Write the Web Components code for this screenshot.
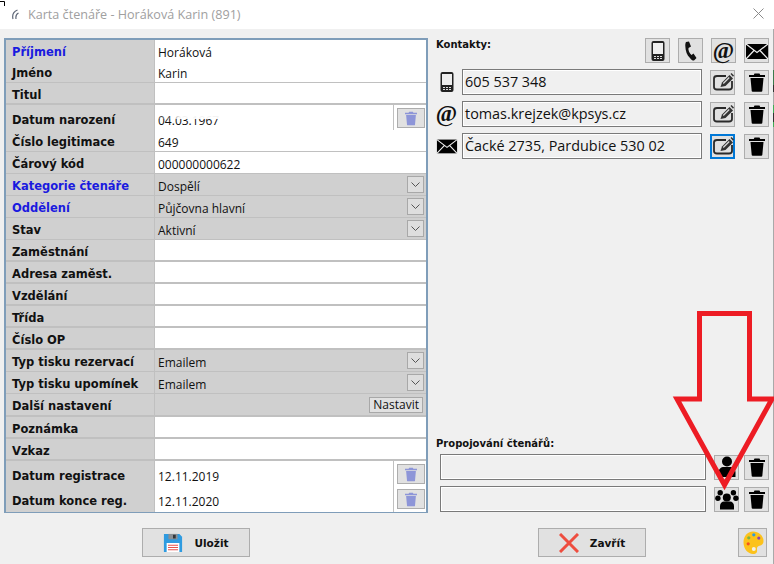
<!DOCTYPE html>
<html>
<head>
<meta charset="utf-8">
<title>Karta čtenáře</title>
<style>
  html, body { margin: 0; padding: 0; background: #f0f0f0; }
  body { width: 774px; height: 564px; overflow: hidden; font-family: "DejaVu Sans", sans-serif; }
</style>
</head>
<body>
<reader-card></reader-card>

<script>
const ICONS = {
  mobile: `<svg viewBox="0 0 24 24" width="24" height="24"><rect x="5.500" y="2" width="13" height="20" rx="2" fill="#222"/><rect x="7" y="4" width="10" height="11" fill="#eee"/><path d="M8 17h2v1H8zM11 17h2v1h-2zM14 17h2v1h-2zM8 19h2v1H8zM11 19h2v1h-2zM14 19h2v1h-2z" fill="#ddd"/></svg>`,
  phone: `<svg viewBox="0 0 24 24" width="24" height="24"><path d="M7 3l3-.5 2 5-2.500 1.500C9 11.500 10.500 14 12.500 16l2-1.500 3 4.500-2.500 2.500c-1 .3-2.500-.5-4-2.500C8 16.500 6.500 12 6.300 7 6.200 5.500 6.500 4 7 3z" fill="#111"/></svg>`,
  envelope: `<svg viewBox="0 0 24 24" width="24" height="24"><rect x="1" y="5" width="22" height="15" fill="#000"/><path d="M1 5l11 8.500L23 5M1 20l8-8.500M23 20l-8-8.500" stroke="#eee" stroke-width="1.200" fill="none"/></svg>`,
  edit: `<svg viewBox="0 0 24 24" width="24" height="24"><path d="M15 6H6C4 6 3 7 3 8.500V17c0 1.500 1 2.500 3 2.500h12c2 0 3-1 3-2.500v-6" fill="none" stroke="#2a2a2a" stroke-width="1.800"/><path d="M9.500 17l1.500-4.500 7.500-7.500 3.500 3.500-7.500 7.500z" fill="#333"/><path d="M19.500 4l1-1 2.500 2.500-1 1.300z" fill="#333"/><path d="M11.800 13l6-6 .9.900-6 6z" fill="#ddd"/></svg>`,
  trash: `<svg viewBox="0 0 24 24" width="24" height="24"><path d="M9.500 3.500h5l.7 1.500H20v2H4V5h4.800z" fill="currentColor"/><path d="M5.500 8h13L17.300 21c-.1.500-.4.800-1 .800H7.700c-.6 0-.9-.3-1-.800z" fill="currentColor"/></svg>`,
  person: `<svg viewBox="0 0 24 24" width="24" height="24"><circle cx="12" cy="6.500" r="5" fill="#000"/><path d="M3.500 22v-4.500c0-3.500 2.500-5.500 5.500-5.500h6c3 0 5.500 2 5.500 5.500V22z" fill="#000"/></svg>`,
  group: `<svg viewBox="0 0 24 24" width="24" height="24"><circle cx="11.800" cy="10.500" r="4" fill="#000"/><circle cx="5.200" cy="5.800" r="2.700" fill="#000"/><circle cx="18.400" cy="5.800" r="2.700" fill="#000"/><circle cx="2.900" cy="11.300" r="2.700" fill="#000"/><circle cx="20.900" cy="11.300" r="2.700" fill="#000"/><path d="M5 22.500v-3.500c0-3 2-4.500 4-4.500h6c2 0 4 1.500 4 4.500v3.500z" fill="#000"/></svg>`,
  at: `<span style="font:700 23px/24px 'Liberation Serif', serif;color:#111">@</span>`,
  floppy: `<svg viewBox="0 0 22 22" width="20" height="20"><path d="M1 1h17l3 3v17H1z" fill="#2f9be0"/><rect x="6" y="1" width="10" height="6" fill="#8a8f94"/><rect x="11" y="2" width="3" height="4" fill="#33363a"/><rect x="4" y="11" width="14" height="10" fill="#fff"/><path d="M5.500 13.500h11M5.500 16h11M5.500 18.500h11" stroke="#e8524c" stroke-width="1.200"/></svg>`,
  cross: `<svg viewBox="2 2 20 20" width="20" height="20"><path d="M3 3l18 18M21 3L3 21" stroke="#ee4d3f" stroke-width="3" fill="none"/></svg>`,
  palette: `<svg viewBox="0 0 24 25" width="24" height="25"><path d="M12 1.500C6 1.500 2.500 6.500 2.500 12.500 2.500 19 7 24 12 24c3.500 0 4.500-2 4-4.500-.3-2 .5-3.500 2.500-3.800 2.500-.4 4-1.700 4-4.700 0-5.500-5-9.500-10.500-9.500z" fill="#fcc21b"/><circle cx="12.800" cy="4.800" r="1.600" fill="#2f9be0"/><circle cx="7.800" cy="7.800" r="1.600" fill="#7cb342"/><circle cx="17.800" cy="8.100" r="1.600" fill="#8e44ad"/><circle cx="7.200" cy="13.800" r="1.600" fill="#f4511e"/><circle cx="12.800" cy="19" r="2" fill="#f5f0e6"/></svg>`
};

class ReaderRow extends HTMLElement {
  constructor() {
    super();
    this.attachShadow({ mode: "open" });
  }

  connectedCallback() {
    const type = this.getAttribute("type") || "text";
    const value = this.getAttribute("value") || "";
    let extra = "";
    if (type === "select") extra = `<span class="combo"><svg viewBox="0 0 9 5" width="9" height="5"><path d="M.5.500l4 4 4-4" fill="none" stroke="#555"/></svg></span>`;
    if (type === "date") extra = `<span class="date-btn"><span class="del">${ICONS.trash}</span></span>`;
    if (type === "button") extra = `<span class="nastavit">${this.getAttribute("action")}</span>`;
    this.shadowRoot.innerHTML = /* html */`
      <style>
        :host { display: block; height: var(--h, 22px); }
        .row { display: grid; grid-template-columns: 149px 1fr; height: 100%; box-sizing: border-box; border-bottom: 2px solid #c0c0c0; }
        .label { background: #d0d0d0; border-right: 1px solid #c0c0c0; padding: 3px 0 0 6px; display: flex; align-items: center; font: 700 11.500px "DejaVu Sans", sans-serif; color: var(--label, #111); white-space: nowrap; }
        .value { background: #fff; display: flex; align-items: center; padding-left: 3px; font: 12px "Open Sans", sans-serif; color: #111; position: relative; }
        :host([type=select]) .value, :host([type=button]) .value { background: #d0d0d0; }
        .text { flex: 1; padding-top: 4px; }
        .combo { display: flex; align-items: center; justify-content: center; width: 15px; height: 15px; margin-right: 2px; border: 1px solid #a8a8a8; background: #dedede; }
        .date-btn { align-self: stretch; width: 33px; box-sizing: border-box; border-left: 1px solid #c0c0c0; padding: 3px 0 3px 3px; display: flex; }
        .del { flex: 1; display: flex; align-items: center; justify-content: center; border: 1px solid #adadad; background: #e1e1e1; margin-right: 1px; color: #8d95d8; }
        .del svg { width: 18px; height: 18px; }
        .nastavit { font: 12px "Open Sans", sans-serif; line-height: 14px; padding: 0 3px; border: 1px solid #a8a8a8; background: #e1e1e1; margin-right: 3px; }
        .smudge { position: absolute; left: 3px; top: 0; width: 72px; height: 14px; background: linear-gradient(90deg, rgba(255,255,255,.2) 0 12px, rgba(255,255,255,.95) 22px); }
      </style>
      <div class="row">
        <div class="label"><slot></slot></div>
        <div class="value"><span class="text">${value}</span>${extra}${this.hasAttribute("smudge") ? '<span class="smudge"></span>' : ""}</div>
      </div>`;
  }
}

class IconBtn extends HTMLElement {
  constructor() {
    super();
    this.attachShadow({ mode: "open" });
  }

  connectedCallback() {
    this.shadowRoot.innerHTML = /* html */`
      <style>
        :host { display: flex; align-items: center; justify-content: center; box-sizing: border-box; width: 25px; height: 25px; border: 1px solid #adadad; background: #e1e1e1; color: #000; }
        :host([focus]) { border: 2px solid #0078d7; }
        svg { flex: none; }
      </style>
      ${ICONS[this.getAttribute("icon")]}`;
  }
}

class ContactRow extends HTMLElement {
  constructor() {
    super();
    this.attachShadow({ mode: "open" });
  }

  connectedCallback() {
    const icon = this.getAttribute("icon");
    this.shadowRoot.innerHTML = /* html */`
      <style>
        :host { display: flex; align-items: center; height: 26px; }
        .lead { width: 21px; margin-right: 5px; display: flex; justify-content: center; flex: none; }
        .lead svg { flex: none; width: 22px; height: 22px; }
        :host([icon=mobile]) .lead svg { width: 24px; height: 24px; }
        .field { width: 240px; height: 26px; box-sizing: border-box; border: 1px solid #7a7a7a; box-shadow: inset 0 0 0 1px #fff; padding-left: 2px; font: 14.400px/24px "Open Sans", sans-serif; color: #111; white-space: nowrap; }
        .btns { display: flex; gap: 9px; margin-left: 8px; }
      </style>
      <span class="lead">${ICONS[icon]}</span>
      <span class="field"><slot></slot></span>
      <span class="btns">
        <icon-btn icon="edit" ${this.hasAttribute("focus") ? "focus" : ""}></icon-btn>
        <icon-btn icon="trash"></icon-btn>
      </span>`;
  }
}

class LinkRow extends HTMLElement {
  constructor() {
    super();
    this.attachShadow({ mode: "open" });
  }

  connectedCallback() {
    this.shadowRoot.innerHTML = /* html */`
      <style>
        :host { display: flex; align-items: center; height: 26px; padding-left: 4px; }
        .field { width: 266px; height: 26px; box-sizing: border-box; border: 1px solid #7a7a7a; box-shadow: inset 0 0 0 1px #fff; }
        .btns { display: flex; gap: 5px; margin-left: 8px; }
      </style>
      <span class="field"></span>
      <span class="btns">
        <icon-btn icon="${this.getAttribute("icon")}"></icon-btn>
        <icon-btn icon="trash"></icon-btn>
      </span>`;
  }
}

class ActionBtn extends HTMLElement {
  constructor() {
    super();
    this.attachShadow({ mode: "open" });
  }

  connectedCallback() {
    this.shadowRoot.innerHTML = /* html */`
      <style>
        :host { display: flex; align-items: center; justify-content: center; gap: 11px; box-sizing: border-box; width: 108px; height: 29px; border: 1px solid #adadad; background: #e1e1e1; font: 700 10.500px "DejaVu Sans", sans-serif; color: #111; }
      </style>
      ${ICONS[this.getAttribute("icon")]}<slot></slot>`;
  }
}

class ReaderCard extends HTMLElement {
  constructor() {
    super();
    this.attachShadow({ mode: "open" });
  }

  connectedCallback() {
    this.shadowRoot.innerHTML = /* html */`
      <style>
        :host { display: flex; flex-direction: column; width: 774px; height: 564px; position: relative; background: #f0f0f0; color: #111; }
        .titlebar { height: 29px; background: #fff; display: flex; align-items: center; flex: none; color: #a0a0a0; padding-left: 11px; }
        .titlebar .logo { margin-right: 9px; }
        .titlebar .name { flex: 1; font: 12.600px "Open Sans", sans-serif; }
        .titlebar .close { margin: 0 10px 3px 0; }
        .corner { position: absolute; left: 0; top: 0; }
        .edge { position: absolute; right: 0; top: 29px; width: 1px; height: 535px; background: linear-gradient(#a9a9a9 0 41px, #3c7a4c 41px 56px, #333 56px 63px, #a9a9a9 63px 76px, #3fae55 76px 84px, #333 84px 93px, #3fae55 93px 98px, #a9a9a9 98px); }
        .main { display: flex; padding: 9px 0 0 4px; height: 475px; flex: none; }
        .table { width: 424px; box-sizing: border-box; border: 2px solid #7f9db9; }
        .side { margin-left: 8px; width: 338px; display: flex; flex-direction: column; height: 474px; }
        .head { display: flex; height: 31px; align-items: flex-start; }
        .head b, .subhead { font: 700 10px "DejaVu Sans", sans-serif; }
        .head b { flex: 1; margin-top: 1px; }
        .head .tools { display: flex; gap: 8px; margin-right: 5px; }
        .contacts { display: flex; flex-direction: column; gap: 6px; }
        .spacer { flex: 1; }
        .subhead { margin-bottom: 5px; }
        .links { display: flex; flex-direction: column; gap: 6px; }
        .footer { display: flex; padding: 15px 0 0 142px; }
        .footer .save { margin-right: 288px; }
        .footer .paint { width: 29px; margin-left: 92px; padding: 0; }
        .arrow { position: absolute; left: 670px; top: 306px; }
      </style>
      <div class="titlebar">
        <svg class="logo" width="8" height="11" viewBox="0 0 8 11"><path d="M6.500 1C3 2.500 1 6 2 10M7.500 4C5.500 5 4.500 7 5 10" fill="none" stroke="#606878" stroke-width="1.200"/></svg>
        <span class="name">Karta čtenáře - Horáková Karin (891)</span>
        <svg class="close" width="11" height="11" viewBox="0 0 11 11"><path d="M.5.500l10 10M10.500.500l-10 10" stroke="#8a8a8a" fill="none"/></svg>
      </div>
      <svg class="corner" width="6" height="6" viewBox="0 0 6 6"><path d="M0 1.500h4.500V6" fill="none" stroke="#000"/></svg>
      <div class="edge"></div>
      <div class="main">
        <div class="table">
          <reader-row value="Horáková" style="--label:#1a1adf;--h:21px">Příjmení</reader-row>
          <reader-row value="Karin">Jméno</reader-row>
          <reader-row>Titul</reader-row>
          <reader-row type="date" value="04.03.1967" smudge style="--h:25px">Datum narození</reader-row>
          <reader-row value="649">Číslo legitimace</reader-row>
          <reader-row value="000000000622">Čárový kód</reader-row>
          <reader-row type="select" value="Dospělí" style="--label:#1a1adf">Kategorie čtenáře</reader-row>
          <reader-row type="select" value="Půjčovna hlavní" style="--label:#1a1adf">Oddělení</reader-row>
          <reader-row type="select" value="Aktivní">Stav</reader-row>
          <reader-row>Zaměstnání</reader-row>
          <reader-row>Adresa zaměst.</reader-row>
          <reader-row>Vzdělání</reader-row>
          <reader-row>Třída</reader-row>
          <reader-row>Číslo OP</reader-row>
          <reader-row type="select" value="Emailem">Typ tisku rezervací</reader-row>
          <reader-row type="select" value="Emailem">Typ tisku upomínek</reader-row>
          <reader-row type="button" action="Nastavit" style="--h:23px">Další nastavení</reader-row>
          <reader-row>Poznámka</reader-row>
          <reader-row>Vzkaz</reader-row>
          <reader-row type="date" value="12.11.2019" style="--h:25px">Datum registrace</reader-row>
          <reader-row type="date" value="12.11.2020" style="--h:25px">Datum konce reg.</reader-row>
        </div>
        <div class="side">
          <div class="head">
            <b>Kontakty:</b>
            <span class="tools">
              <icon-btn icon="mobile"></icon-btn>
              <icon-btn icon="phone"></icon-btn>
              <icon-btn icon="at"></icon-btn>
              <icon-btn icon="envelope"></icon-btn>
            </span>
          </div>
          <div class="contacts">
            <contact-row icon="mobile">605 537 348</contact-row>
            <contact-row icon="at">tomas.krejzek@kpsys.cz</contact-row>
            <contact-row icon="envelope" focus>Čacké 2735, Pardubice 530 02</contact-row>
          </div>
          <div class="spacer"></div>
          <div class="subhead">Propojování čtenářů:</div>
          <div class="links">
            <link-row icon="person"></link-row>
            <link-row icon="group"></link-row>
          </div>
        </div>
      </div>
      <div class="footer">
        <action-btn class="save" icon="floppy">Uložit</action-btn>
        <action-btn icon="cross">Zavřít</action-btn>
        <action-btn class="paint" icon="palette"></action-btn>
      </div>
      <svg class="arrow" width="104" height="190" viewBox="670 306 104 190"><path d="M699.500 313.500h50v85.500H772L724.500 485 677 399h22.500z" fill="none" stroke="#ed1c24" stroke-width="5"/></svg>`;
  }
}

customElements.define("reader-row", ReaderRow);
customElements.define("icon-btn", IconBtn);
customElements.define("contact-row", ContactRow);
customElements.define("link-row", LinkRow);
customElements.define("action-btn", ActionBtn);
customElements.define("reader-card", ReaderCard);
</script>
</body>
</html>
